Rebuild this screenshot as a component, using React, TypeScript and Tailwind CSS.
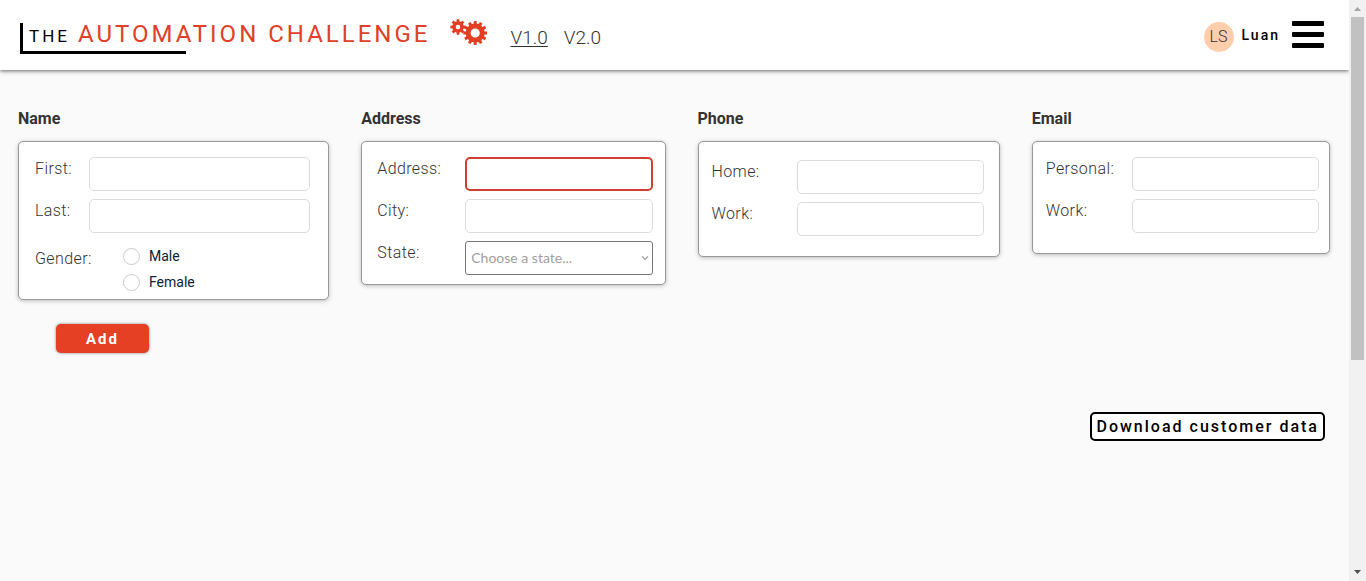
import type { ReactNode } from "react";

function gearPoints(cx: number, cy: number, outer: number, inner: number, teeth: number): string {
  const step = (Math.PI * 2) / teeth;
  const corners: string[] = [];
  for (let i = 0; i < teeth; i++) {
    const a = i * step - Math.PI / 2;
    const add = (r: number, offset: number) =>
      corners.push(`${(cx + r * Math.cos(a + offset * step)).toFixed(2)} ${(cy + r * Math.sin(a + offset * step)).toFixed(2)}`);
    add(inner, -0.32);
    add(outer, -0.22);
    add(outer, 0.22);
    add(inner, 0.32);
  }
  return `M${corners.join("L")}Z`;
}

function hole(cx: number, cy: number, r: number): string {
  return `M${cx - r} ${cy}a${r} ${r} 0 1 0 ${r * 2} 0a${r} ${r} 0 1 0 ${-r * 2} 0Z`;
}

function Gears() {
  return (
    <svg viewBox="0 0 38 28" className="h-7 w-[38px]" fill="#e23e24" fillRule="evenodd" aria-hidden="true">
      <path d={gearPoints(8, 9, 7.8, 5.7, 8) + hole(8, 9, 2.3)} />
      <path d={gearPoints(25.2, 15, 12, 9.5, 12) + hole(25.2, 15, 4.6)} />
    </svg>
  );
}

const inputClass = "h-[34px] w-full min-w-0 rounded-[5px] border bg-white px-2 text-sm outline-none";

function Field({ id, label, cols, alert = false }: { id: string; label: string; cols: string; alert?: boolean }) {
  return (
    <div className={`grid items-start ${cols}`}>
      <label htmlFor={id} className="font-light tracking-wide">
        {label}
      </label>
      <input id={id} type="text" className={`${inputClass} ${alert ? "border-2 border-[#d0402f]" : "border-[#dcdcdc]"}`} />
    </div>
  );
}

function Card({ title, className, children }: { title: string; className: string; children: ReactNode }) {
  return (
    <section>
      <h2 className="mb-2.5 font-bold leading-6 text-[#333]">{title}</h2>
      <div className={`flex flex-col gap-2 rounded-[5px] border border-[#999] bg-white shadow-[0_1px_4px_rgba(0,0,0,0.25)] ${className}`}>
        {children}
      </div>
    </section>
  );
}

function Radio({ label }: { label: string }) {
  return (
    <label className="flex items-center gap-[9px] text-sm leading-[18px] text-[#0b2239]">
      <input type="radio" name="gender" className="size-[17px] appearance-none rounded-full border border-[#ccc] bg-white checked:border-4 checked:border-[#e64024]" />
      {label}
    </label>
  );
}

function Header() {
  return (
    <header className="flex h-[70px] items-start justify-between bg-white pl-5 pr-[25px] shadow-[0_1px_4px_rgba(0,0,0,0.6)]">
      <div className="flex items-start">
        <h1 className="relative mt-[19px] flex h-[35px] items-baseline gap-2 whitespace-nowrap pl-[9px] leading-[30px]">
          <span className="absolute bottom-0 left-0 h-[31px] w-[166px] border-b-[3px] border-black" />
          <span className="absolute bottom-0 left-0 h-[31px] w-[3px] bg-black" />
          <span className="text-[17px] tracking-[3px] text-black">THE</span>
          <span className="text-2xl leading-[30px] tracking-[3px] text-[#e0402a]">AUTOMATION CHALLENGE</span>
        </h1>
        <div className="ml-5 mt-[18px]">
          <Gears />
        </div>
        <nav className="ml-[22px] mt-6 flex gap-4 text-[19px] font-light leading-7 text-[#333]">
          <a href="#v1" className="underline underline-offset-2">V1.0</a>
          <a href="#v2">V2.0</a>
        </nav>
      </div>
      <div className="mt-[21px] flex items-start">
        <span className="mt-px flex size-[30px] items-center justify-center rounded-full bg-[#ffcfad] text-base font-light text-[#333]">LS</span>
        <span className="ml-2 mt-1 text-sm font-medium leading-5 tracking-[2px] text-black">Luan</span>
        <button type="button" aria-label="Menu" className="ml-3 flex w-8 flex-col gap-1.5">
          <span className="h-[5px] w-full rounded-[1px] bg-black" />
          <span className="h-[5px] w-full rounded-[1px] bg-black" />
          <span className="h-[5px] w-full rounded-[1px] bg-black" />
        </button>
      </div>
    </header>
  );
}

function Scrollbar() {
  return (
    <div aria-hidden="true" className="flex w-[17px] shrink-0 flex-col items-center bg-[#f1f1f1]">
      <svg viewBox="0 0 17 17" className="size-[17px]">
        <path d="M5 11 8.500 7 12 11Z" fill="#a3a3a3" />
      </svg>
      <div className="h-[59%] w-[13px] bg-[#c1c1c1]" />
      <svg viewBox="0 0 17 17" className="mt-auto size-[17px]">
        <path d="M5 6 8.500 10 12 6Z" fill="#505050" />
      </svg>
    </div>
  );
}

export default function App() {
  return (
    <div className="flex min-h-screen bg-[#fafafa] font-['Roboto',sans-serif] text-base leading-6 text-[#333]">
      <div className="min-w-0 flex-1">
        <Header />
        <main className="pl-[18px] pr-[19px] pt-[37px]">
          <form onSubmit={(event) => event.preventDefault()}>
            <div className="grid grid-cols-[311fr_304fr_302fr_298fr] items-start gap-x-8">
              <Card title="Name" className="pb-2 pl-4 pr-[18px] pt-[15px]">
                <Field id="first" label="First:" cols="grid-cols-[54px_1fr]" />
                <Field id="last" label="Last:" cols="grid-cols-[54px_1fr]" />
                <fieldset className="mt-1.5 grid grid-cols-[88px_1fr]">
                  <span className="font-light tracking-wide">Gender:</span>
                  <div className="flex flex-col gap-2">
                    <Radio label="Male" />
                    <Radio label="Female" />
                  </div>
                </fieldset>
              </Card>
              <Card title="Address" className="pb-[9px] pl-[15px] pr-3 pt-[15px]">
                <Field id="address" label="Address:" cols="grid-cols-[88px_1fr]" alert />
                <Field id="city" label="City:" cols="grid-cols-[88px_1fr]" />
                <div className="grid grid-cols-[88px_1fr] items-start">
                  <label htmlFor="state" className="font-light tracking-wide">State:</label>
                  <div className="relative">
                    <select
                      id="state"
                      defaultValue=""
                      className="h-[34px] w-full appearance-none rounded-[3px] border border-[#767676] bg-white pl-[5px] pr-5 font-['Lato',sans-serif] text-sm text-[#a0a0a0]"
                    >
                      <option value="">Choose a state...</option>
                    </select>
                    <svg viewBox="0 0 8 6" className="pointer-events-none absolute right-1 top-3.5 h-1.5 w-2" fill="none" stroke="#999" strokeWidth="1.2">
                      <path d="M1 1.300 4 4.300 7 1.300" />
                    </svg>
                  </div>
                </div>
              </Card>
              <Card title="Phone" className="pb-5 pl-[13px] pr-[15px] pt-[18px]">
                <Field id="home-phone" label="Home:" cols="grid-cols-[85px_1fr]" />
                <Field id="work-phone" label="Work:" cols="grid-cols-[85px_1fr]" />
              </Card>
              <Card title="Email" className="pb-5 pl-[13px] pr-2.5 pt-[15px]">
                <Field id="personal-email" label="Personal:" cols="grid-cols-[86px_1fr]" />
                <Field id="work-email" label="Work:" cols="grid-cols-[86px_1fr]" />
              </Card>
            </div>
            <button
              type="submit"
              className="ml-[38px] mt-6 block h-[29px] w-[93px] rounded-[5px] bg-[#e64024] text-[15px] font-bold leading-5 tracking-[2px] text-white shadow-[0_0_3px_rgba(0,0,0,0.5)]"
            >
              Add
            </button>
          </form>
          <div className="mr-[5px] mt-[59px] flex justify-end">
            <button type="button" className="h-[29px] whitespace-nowrap rounded-[5px] border-2 border-black bg-white px-1 font-medium leading-5 tracking-[2px] text-black">
              Download customer data
            </button>
          </div>
        </main>
      </div>
      <Scrollbar />
    </div>
  );
}
